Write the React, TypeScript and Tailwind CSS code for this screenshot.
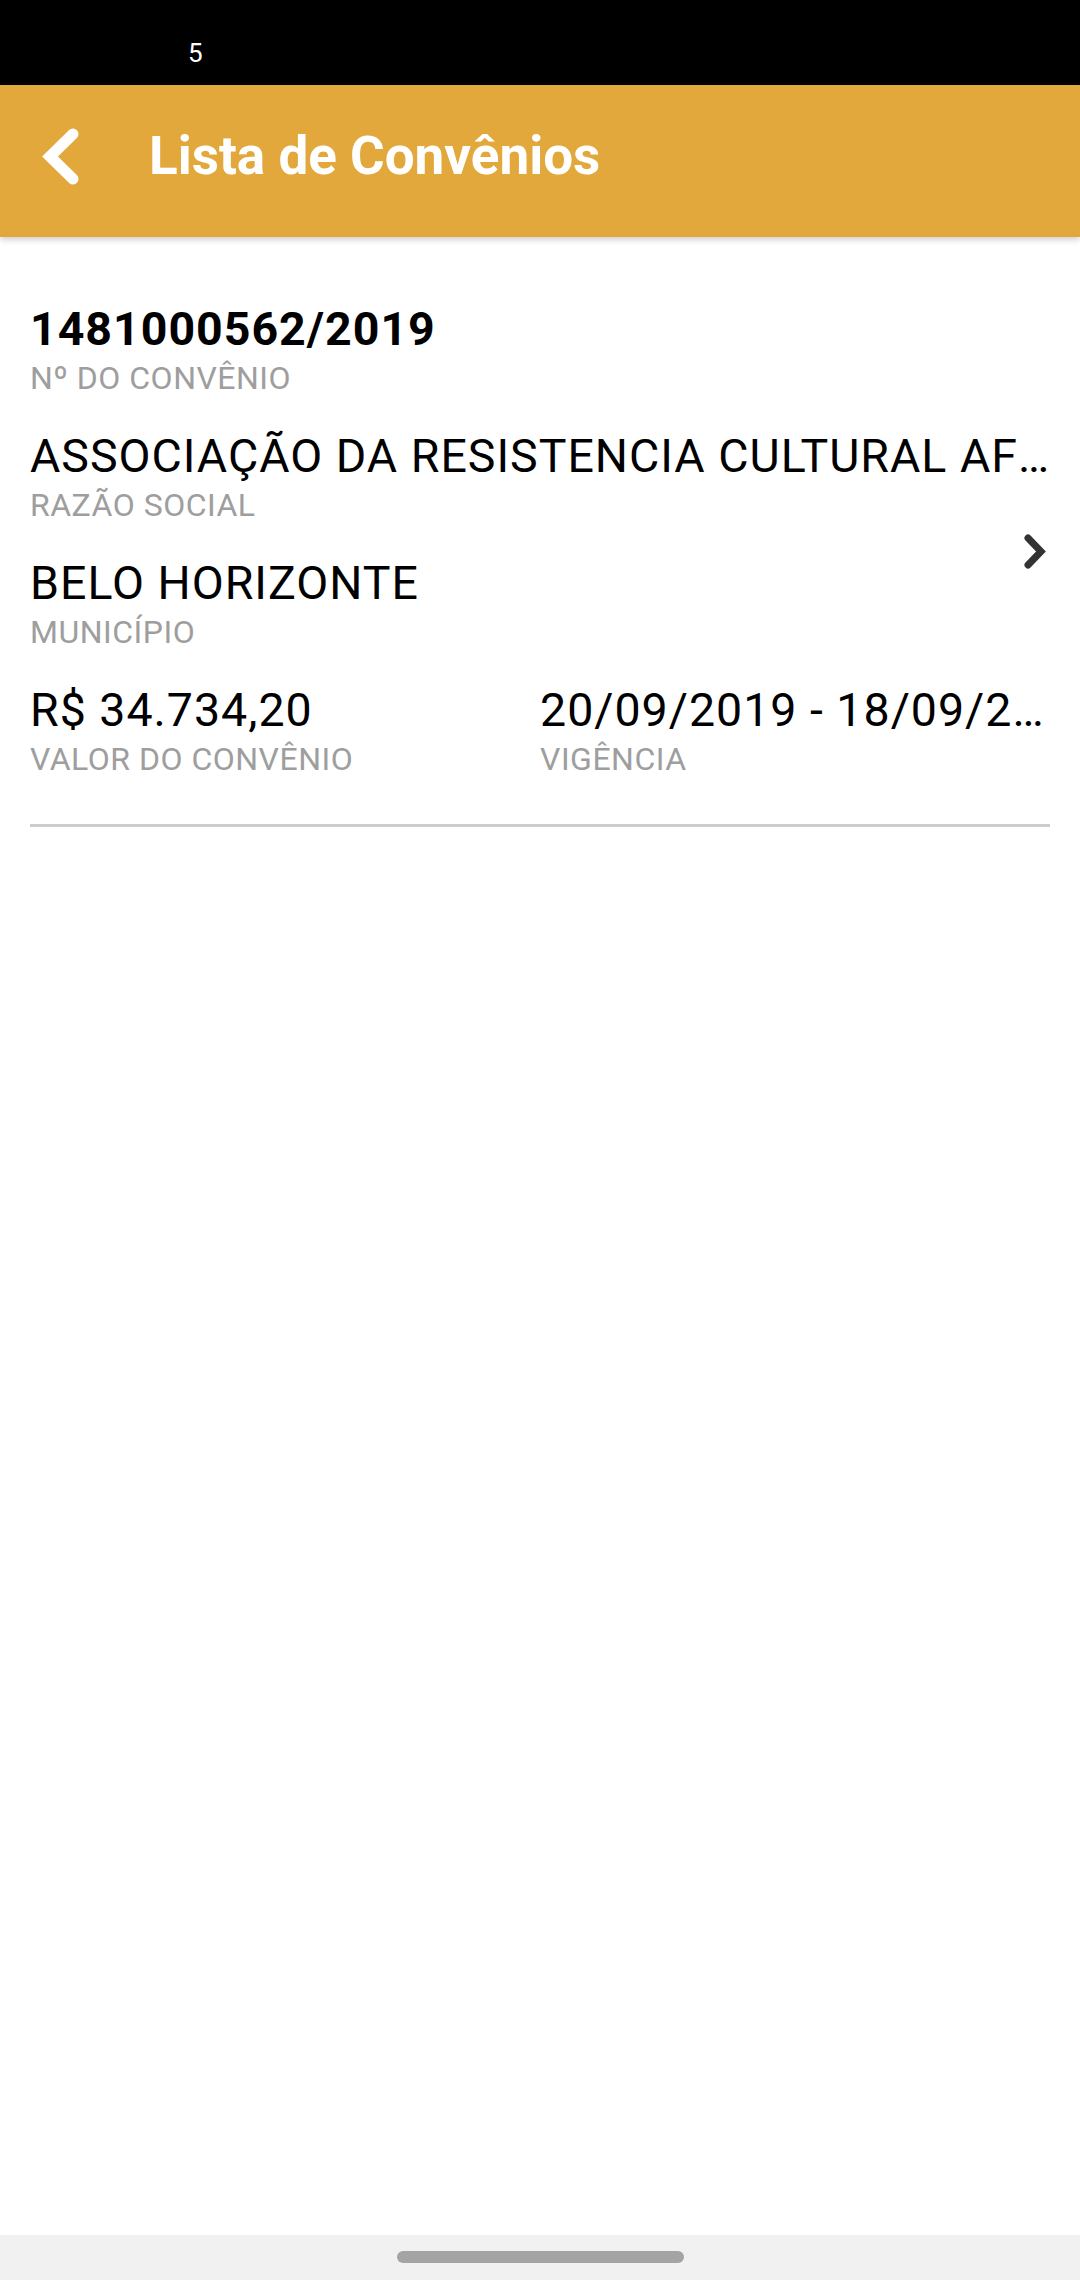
import React from 'react';

const fields = [
  { value: 'ASSOCIAÇÃO DA RESISTENCIA CULTURAL AFRO BRASILEIRA', label: 'RAZÃO SOCIAL' },
  { value: 'BELO HORIZONTE', label: 'MUNICÍPIO' },
];

const Field: React.FC<{ value: string; label: string; bold?: boolean }> = ({ value, label, bold }) => (
  <div className="flex flex-col min-w-0">
    <p className={`text-[46.5px] leading-[54px] tracking-[1px] text-black truncate ${bold ? 'font-bold' : 'font-normal'}`}>{value}</p>
    <p className="mt-[4px] text-[32px] leading-[37px] tracking-[0.5px] text-[#9e9e9e] truncate">{label}</p>
  </div>
);

const App: React.FC = () => {
  return (
    <div className="w-[1080px] h-[2280px] flex flex-col bg-white font-['Roboto',sans-serif]">
      {/* Status bar */}
      <div className="h-[85px] bg-black pl-[188px] pt-[40px] shrink-0">
        <span className="text-[26px] leading-[26px] text-white">5</span>
      </div>

      {/* Toolbar */}
      <header className="relative z-10 h-[152px] shrink-0 bg-[#E2A83B] shadow-[0_3px_6px_rgba(0,0,0,0.18)] flex items-center pb-[9px]">
        <div className="w-[149px] pl-[42px] flex items-center">
          <svg width="38" height="57" viewBox="0 0 38 57">
            <polyline points="31,6 8,28.5 31,51" fill="none" stroke="#ffffff" strokeWidth="11" strokeLinecap="round" strokeLinejoin="miter" />
          </svg>
        </div>
        <h1 className="text-[53px] leading-none font-bold text-white">Lista de Convênios</h1>
      </header>

      {/* List */}
      <main className="flex-1 px-[30px] pt-[65px]">
        <div className="relative">
          <div className="flex flex-col gap-[32px] pb-[46px]">
            <Field value="1481000562/2019" label="Nº DO CONVÊNIO" bold />
            {fields.map((f) => (
              <Field key={f.label} value={f.value} label={f.label} />
            ))}
            <div className="grid grid-cols-2">
              <Field value="R$ 34.734,20" label="VALOR DO CONVÊNIO" />
              <Field value="20/09/2019 - 18/09/2021" label="VIGÊNCIA" />
            </div>
          </div>
          <div className="h-[3px] bg-[#cccccc]" />

          <svg className="absolute right-[3px] top-[231px]" width="25" height="37" viewBox="0 0 25 37">
            <polyline points="6,5 19,18.5 6,32" fill="none" stroke="#333333" strokeWidth="7" strokeLinecap="round" strokeLinejoin="miter" />
          </svg>
        </div>
      </main>

      {/* Navigation bar */}
      <div className="h-[45px] shrink-0 bg-[#f1f1f1] flex justify-center pt-[16px]">
        <div className="w-[287px] h-[12px] rounded-full bg-[#a4a4a4]" />
      </div>
    </div>
  );
};

export default App;
